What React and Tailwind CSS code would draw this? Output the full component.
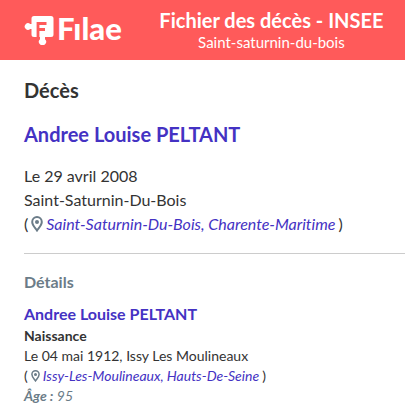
function PuzzleMark() {
  return (
    <svg width="30" height="30" viewBox="0 0 30 30" aria-hidden="true" className="shrink-0">
      <path
        fill="#fff"
        d="M10 1h17q2.500 0 2.500 2.500v16q0 2.500-2.500 2.500h-6v2.200a3.600 3.600 0 1 1-5 0V22h-6q-2.500 0-2.500-2.500V14H6.200a3.300 3.300 0 1 1 0-5H7.500V3.500Q7.500 1 10 1Z"
      />
      <path fill="none" stroke="#ff5a5a" strokeWidth="2.800" d="M22.500 8.500H14V22M14 14.500h7" />
    </svg>
  )
}

function Pin({ className }) {
  return (
    <svg viewBox="0 0 12 16" fill="none" stroke="#6b7c88" aria-hidden="true" className={className}>
      <path strokeWidth="2" d="M6 14.500C4.500 12.200 1.200 9 1.200 5.900a4.800 4.800 0 0 1 9.600 0C10.800 9 7.500 12.200 6 14.500Z" />
      <circle cx="6" cy="6" r="2" fill="#6b7c88" stroke="none" />
    </svg>
  )
}

export default function App() {
  return (
    <div className="bg-white font-['Lato',sans-serif] text-[#333] [font-variant-ligatures:none]">
      <header className="flex h-15 items-center bg-[#ff5a5a] pl-6 text-white">
        <a href="#accueil" aria-label="Filae" className="flex items-center gap-[3px]">
          <PuzzleMark />
          <span className="pb-1 text-[31px] leading-7 font-black">Fılae</span>
        </a>
        <div className="flex-1 pl-4 text-center">
          <h1 className="text-xl leading-6 font-bold">Fichier des décès - INSEE</h1>
          <p className="text-[15px] leading-5">Saint-saturnin-du-bois</p>
        </div>
      </header>
      <main className="pt-4 pl-6">
        <h2 className="text-xl leading-7 font-bold">Décès</h2>
        <h3 className="mt-4 text-xl leading-7 font-bold text-[#4432c3]">Andree Louise PELTANT</h3>
        <div className="mt-4 text-base leading-6">
          <p>Le 29 avril 2008</p>
          <p>Saint-Saturnin-Du-Bois</p>
          <p className="flex items-center gap-[3px]">
            (<Pin className="h-4 w-3" />
            <a href="#saint-saturnin" className="text-[#4432c3] italic">Saint-Saturnin-Du-Bois, Charente-Maritime</a>)
          </p>
        </div>
        <hr className="mt-[17px] border-[#ccc]" />
        <section className="pt-4 text-sm leading-5">
          <h2 className="text-base leading-6 font-bold text-[#6b7c88]">Détails</h2>
          <h3 className="mt-2 text-base leading-6 font-bold text-[#4432c3]">Andree Louise PELTANT</h3>
          <p className="font-bold">Naissance</p>
          <p>Le 04 mai 1912, Issy Les Moulineaux</p>
          <p className="flex items-center gap-[3px]">
            (<Pin className="h-3 w-[9px]" />
            <a href="#issy" className="text-[#4432c3] italic">Issy-Les-Moulineaux, Hauts-De-Seine</a>)
          </p>
          <p className="text-[#6b7c88] italic"><b>Âge :</b> 95</p>
        </section>
      </main>
    </div>
  )
}
